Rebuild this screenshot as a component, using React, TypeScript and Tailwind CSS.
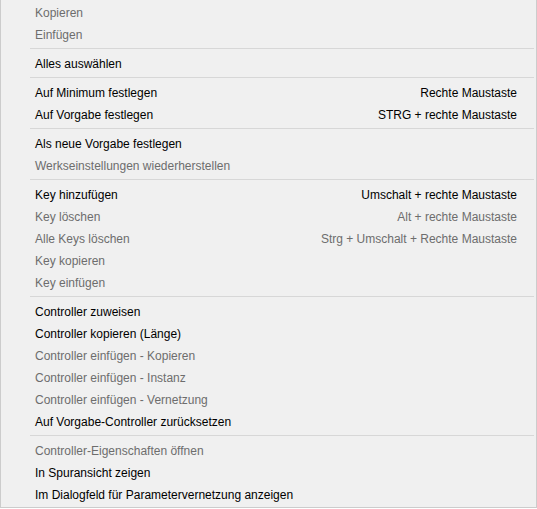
import React from "react";

type Item = { label: string; shortcut?: string; disabled?: boolean } | "sep";

const items: Item[] = [
  { label: "Kopieren", disabled: true },
  { label: "Einfügen", disabled: true },
  "sep",
  { label: "Alles auswählen" },
  "sep",
  { label: "Auf Minimum festlegen", shortcut: "Rechte Maustaste" },
  { label: "Auf Vorgabe festlegen", shortcut: "STRG + rechte Maustaste" },
  "sep",
  { label: "Als neue Vorgabe festlegen" },
  { label: "Werkseinstellungen wiederherstellen", disabled: true },
  "sep",
  { label: "Key hinzufügen", shortcut: "Umschalt + rechte Maustaste" },
  { label: "Key löschen", shortcut: "Alt + rechte Maustaste", disabled: true },
  { label: "Alle Keys löschen", shortcut: "Strg + Umschalt + Rechte Maustaste", disabled: true },
  { label: "Key kopieren", disabled: true },
  { label: "Key einfügen", disabled: true },
  "sep",
  { label: "Controller zuweisen" },
  { label: "Controller kopieren (Länge)" },
  { label: "Controller einfügen - Kopieren", disabled: true },
  { label: "Controller einfügen - Instanz", disabled: true },
  { label: "Controller einfügen - Vernetzung", disabled: true },
  { label: "Auf Vorgabe-Controller zurücksetzen" },
  "sep",
  { label: "Controller-Eigenschaften öffnen", disabled: true },
  { label: "In Spuransicht zeigen" },
  { label: "Im Dialogfeld für Parametervernetzung anzeigen" },
];

export default function App() {
  return (
    <div className="w-[537px] h-[509px] bg-white overflow-hidden">
      <div
        className="w-[537px] h-[508px] bg-[#f0f0f0] border-l border-r border-b border-[#cccccc] pt-px pb-[2px] flex flex-col text-[12px] leading-[22px]"
        style={{ fontFamily: '"Liberation Sans", Arial, sans-serif' }}
      >
        {items.map((it, i) =>
          it === "sep" ? (
            <div key={i} className="h-[7px] flex items-center pl-[29px] pr-[2px]">
              <div className="h-px w-full bg-[#d7d7d7]" />
            </div>
          ) : (
            <div
              key={i}
              className={
                "h-[22px] flex items-center justify-between pl-[34px] pr-[19px] pt-[2px] whitespace-nowrap " +
                (it.disabled ? "text-[#6d6d6d]" : "text-black")
              }
            >
              <span>{it.label}</span>
              {it.shortcut && <span>{it.shortcut}</span>}
            </div>
          )
        )}
      </div>
    </div>
  );
}
